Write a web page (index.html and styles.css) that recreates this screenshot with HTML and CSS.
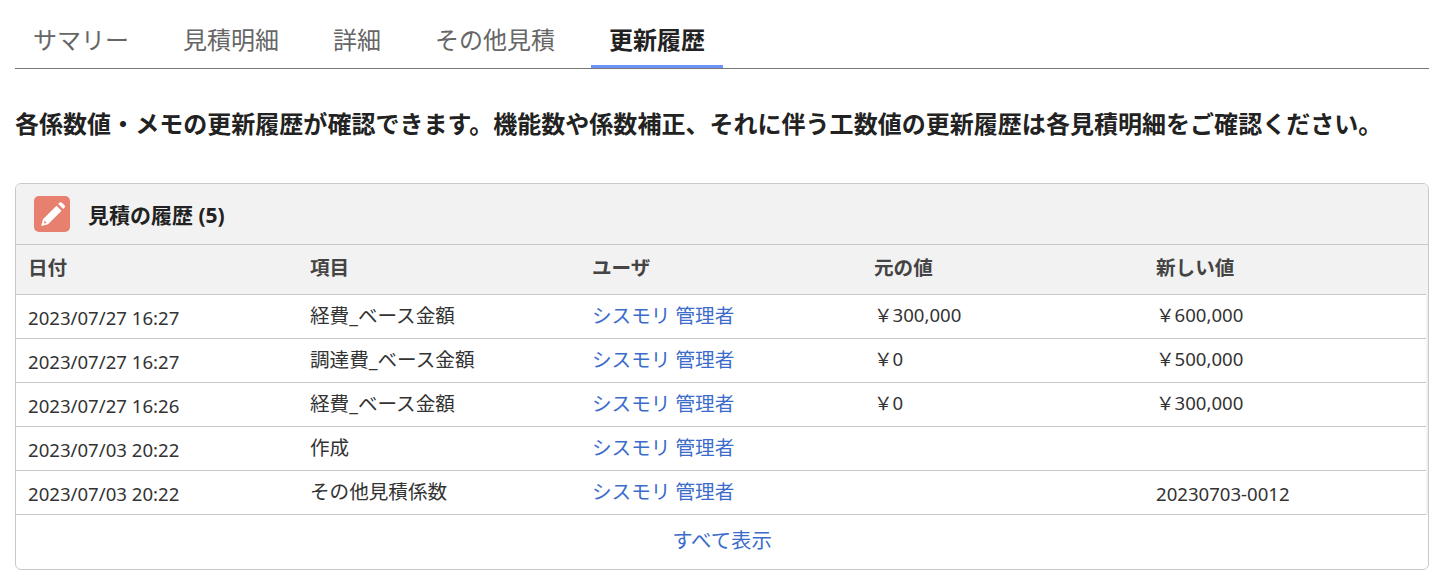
FILE: index.html
```html
<!DOCTYPE html>
<html lang="ja">
<head>
    <meta charset="UTF-8">
    <title>更新履歴</title>
    <link rel="stylesheet" href="styles.css">
</head>
<body>
    <ul class="tabs">
        <li class="tab">サマリー</li>
        <li class="tab">見積明細</li>
        <li class="tab">詳細</li>
        <li class="tab">その他見積</li>
        <li class="tab active">更新履歴</li>
    </ul>

    <p class="lead">各係数値・メモの更新履歴が確認できます。機能数や係数補正、それに伴う工数値の更新履歴は各見積明細をご確認ください。</p>

    <div class="card">
        <div class="card-header">
            <span class="card-icon">
                <svg viewBox="0 0 24 24" width="29" height="29"><path d="M2.600 21.600l1.500-5.700L15.300 4.700l4.200 4.200L8.300 20.100z M4.800 19.500l2.300-.6-1.700-1.700z M16.700 3.300l1-1c.6-.6 1.500-.6 2.100 0l2.100 2.100c.6.6.6 1.500 0 2.100l-1 1z" fill="#fff" fill-rule="evenodd"/></svg>
            </span>
            <h2 class="card-title">見積の履歴 (5)</h2>
        </div>
        <div class="table-wrap">
            <table class="history">
                <thead>
                    <tr>
                        <th>日付</th>
                        <th>項目</th>
                        <th>ユーザ</th>
                        <th>元の値</th>
                        <th>新しい値</th>
                    </tr>
                </thead>
                <tbody>
                    <tr>
                        <td class="num low">2023/07/27 16:27</td>
                        <td>経費_ベース金額</td>
                        <td><a href="#">シスモリ 管理者</a></td>
                        <td class="num">￥300,000</td>
                        <td class="num">￥600,000</td>
                    </tr>
                    <tr>
                        <td class="num low">2023/07/27 16:27</td>
                        <td>調達費_ベース金額</td>
                        <td><a href="#">シスモリ 管理者</a></td>
                        <td class="num">￥0</td>
                        <td class="num">￥500,000</td>
                    </tr>
                    <tr>
                        <td class="num low">2023/07/27 16:26</td>
                        <td>経費_ベース金額</td>
                        <td><a href="#">シスモリ 管理者</a></td>
                        <td class="num">￥0</td>
                        <td class="num">￥300,000</td>
                    </tr>
                    <tr>
                        <td class="num low">2023/07/03 20:22</td>
                        <td>作成</td>
                        <td><a href="#">シスモリ 管理者</a></td>
                        <td></td>
                        <td></td>
                    </tr>
                    <tr>
                        <td class="num low">2023/07/03 20:22</td>
                        <td>その他見積係数</td>
                        <td><a href="#">シスモリ 管理者</a></td>
                        <td></td>
                        <td class="num low">20230703-0012</td>
                    </tr>
                </tbody>
            </table>
        </div>
        <div class="card-footer"><a href="#">すべて表示</a></div>
    </div>
</body>
</html>
```

FILE: styles.css
```css
* {
    box-sizing: border-box;
}

body {
    margin: 0;
    padding: 0 16px 0 15px;
    font-family: "Noto Sans", "Noto Sans CJK JP", sans-serif;
    color: #333;
    background: #fff;
}

a {
    color: #3b6ccb;
    text-decoration: none;
}

.tabs {
    display: flex;
    gap: 18px;
    list-style: none;
    margin: 0;
    padding: 0;
    height: 69px;
    border-bottom: 1px solid #777;
}

.tab {
    height: 68px;
    padding: 22px 18px 0;
    font-size: 24px;
    line-height: 36px;
    color: #666;
}

.tab.active {
    font-weight: 700;
    color: #222;
    border-bottom: 3px solid #6b93fa;
}

.lead {
    margin: 38px 0 0;
    font-size: 24px;
    line-height: 34px;
    font-weight: 700;
    letter-spacing: .03px;
    color: #222;
    white-space: nowrap;
}

.card {
    margin-top: 42px;
    height: 387px;
    border: 1px solid #c9c9c9;
    border-radius: 6px;
    overflow: hidden;
}

.card-header {
    display: flex;
    align-items: center;
    gap: 18px;
    height: 61px;
    padding: 0 18px;
    background: #f2f2f2;
    border-bottom: 1px solid #c9c9c9;
}

.card-icon {
    display: flex;
    align-items: center;
    justify-content: center;
    width: 36px;
    height: 36px;
    border-radius: 5px;
    background: #e8806f;
}

.card-title {
    margin: 0;
    font-size: 21px;
    font-weight: 700;
    color: #222;
}

.table-wrap {
    background: #f2f2f2;
}

.history {
    width: 1410px;
    table-layout: fixed;
    border-collapse: collapse;
    font-size: 19.6px;
}

.history th {
    height: 49px;
    padding: 0 12px 6px;
    text-align: left;
    font-weight: 700;
    color: #444;
    background: #f2f2f2;
    border-bottom: 1px solid #c9c9c9;
}

.history td {
    height: 44px;
    padding: 0 12px 4px;
    background: #fff;
    border-bottom: 1px solid #c9c9c9;
    color: #333;
    white-space: nowrap;
}

.history td.num {
    font-size: 18.6px;
    padding-bottom: 6px;
}

.history td.low {
    padding: 3px 12px 0;
}

.card-footer {
    height: 55px;
    padding-top: 9px;
    text-align: center;
    font-size: 20.4px;
}
```
